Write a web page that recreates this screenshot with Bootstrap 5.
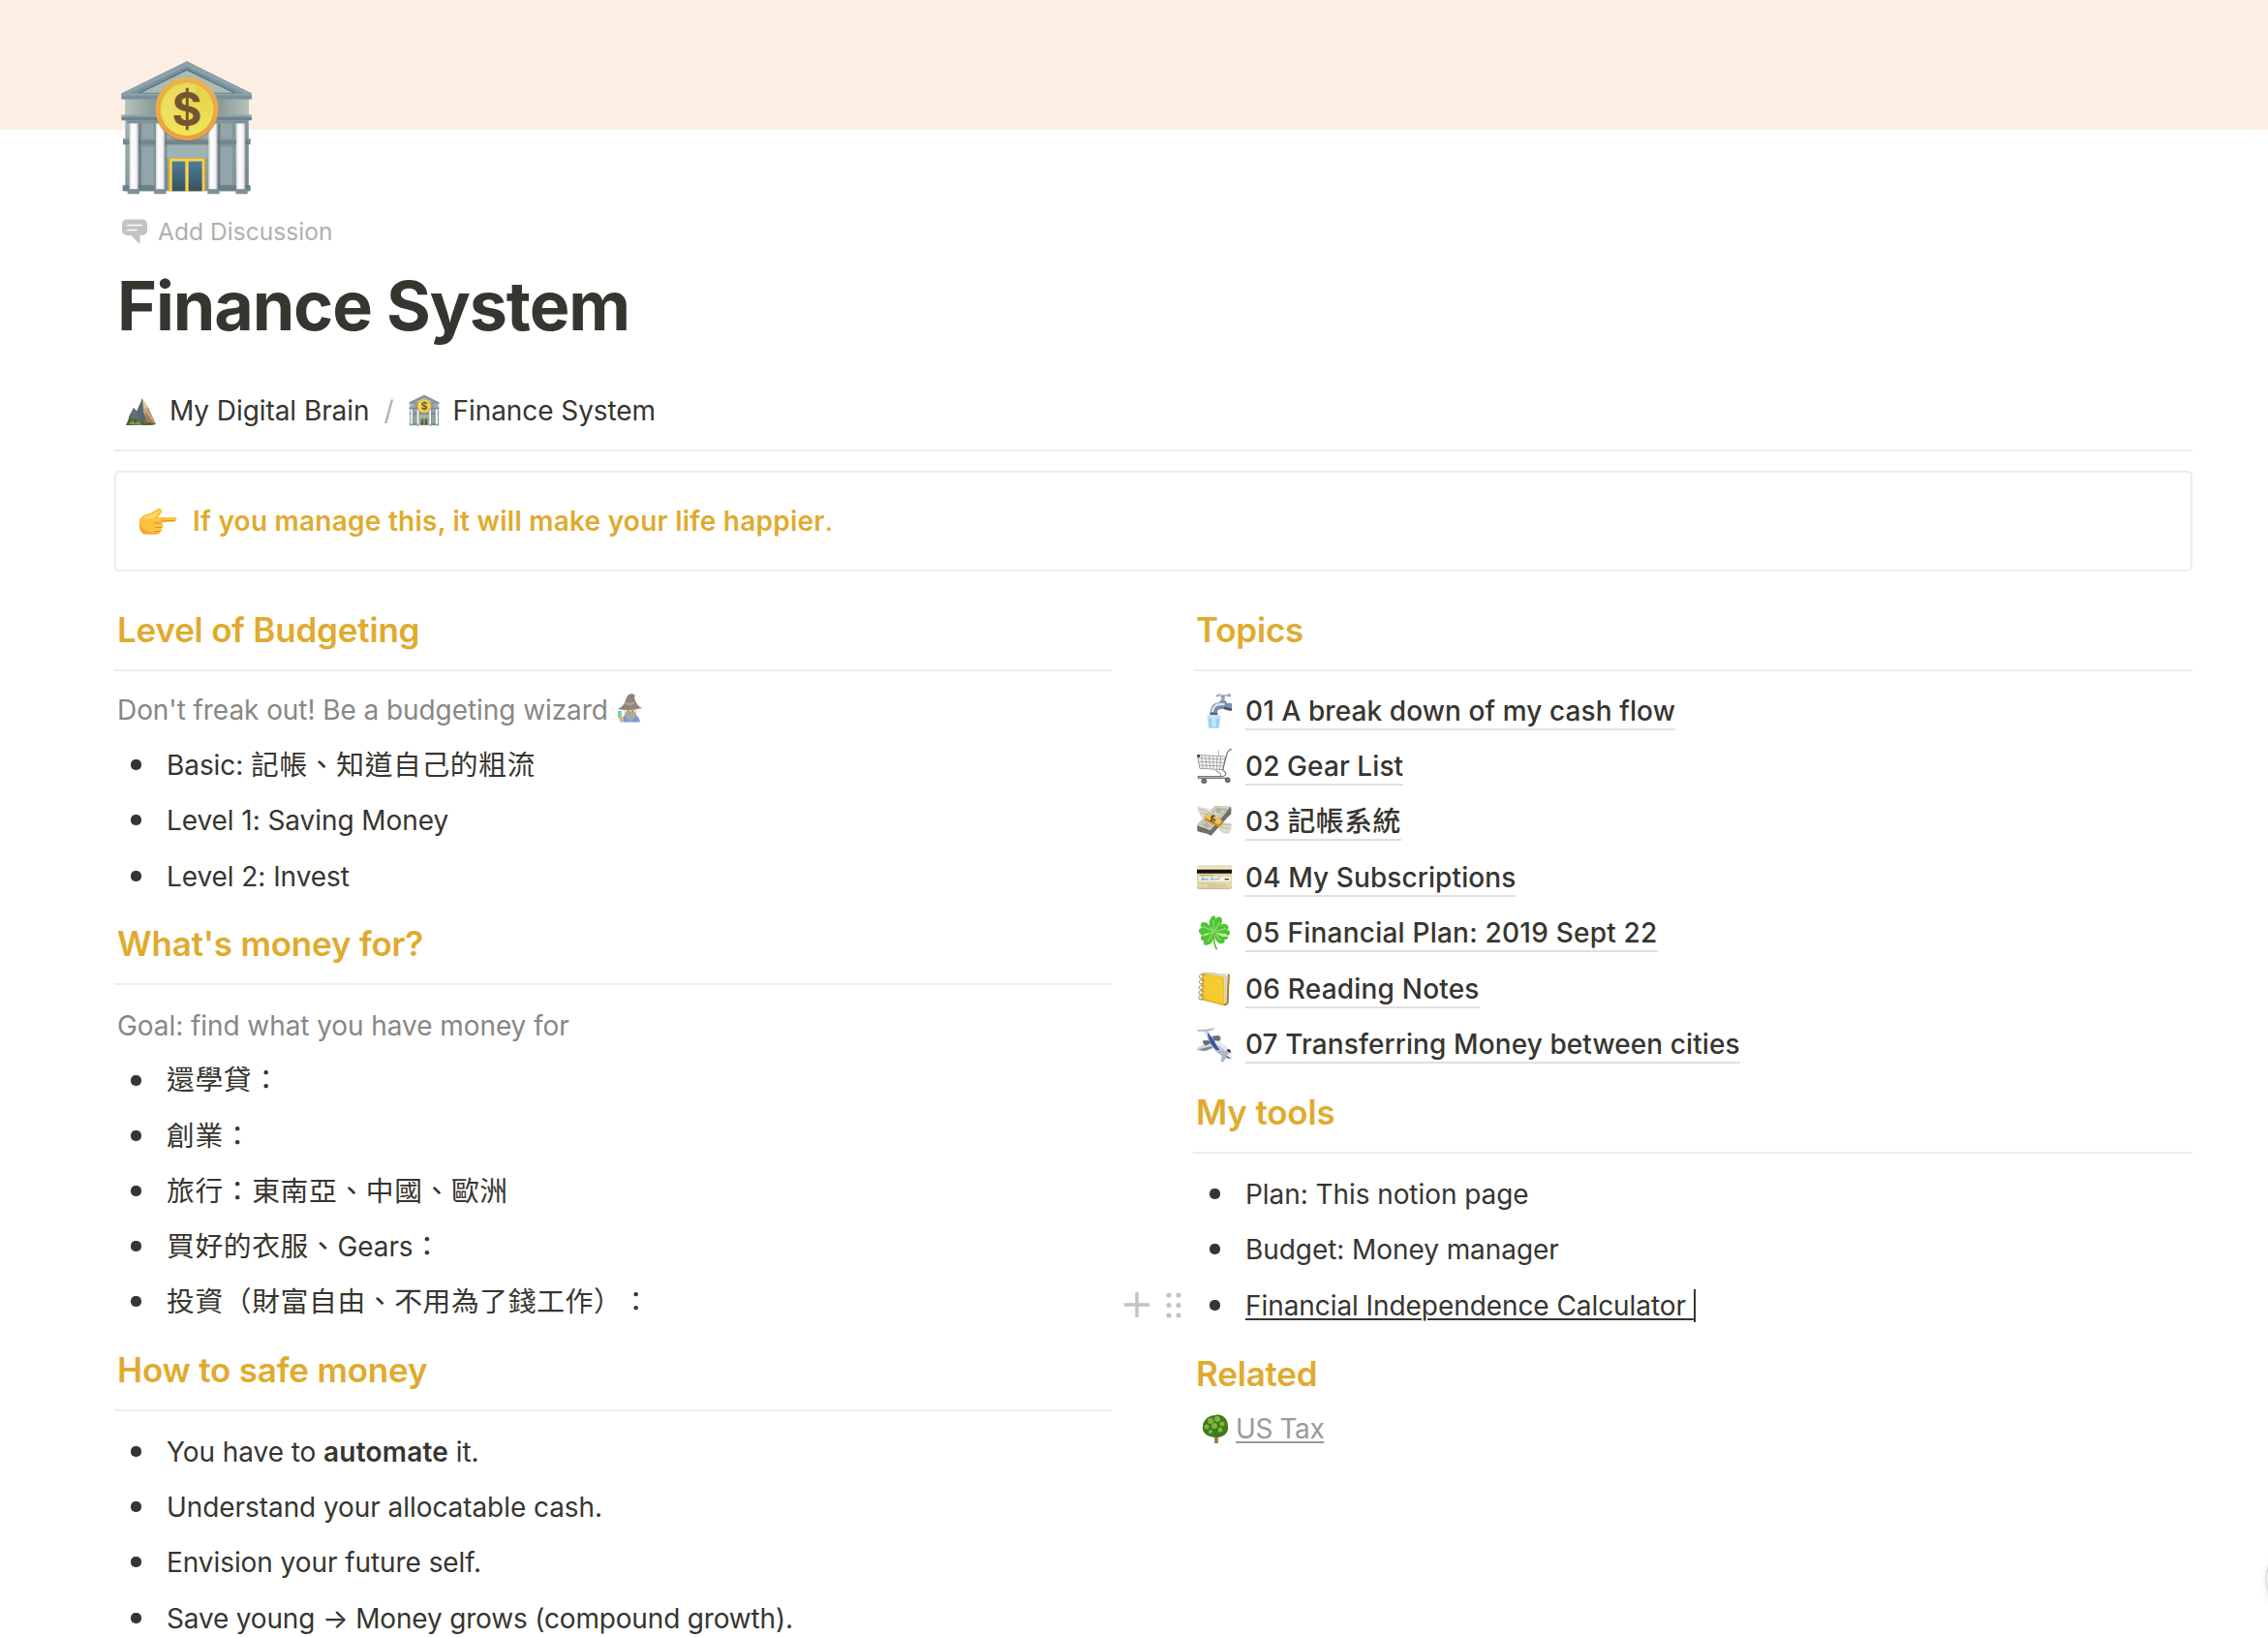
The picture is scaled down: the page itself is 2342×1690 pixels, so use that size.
<!DOCTYPE html>
<html lang="en">
<head>
<meta charset="utf-8">
<meta name="viewport" content="width=device-width, initial-scale=1">
<title>Finance System</title>
<link rel="stylesheet" href="https://cdn.jsdelivr.net/npm/bootstrap@5.3.0/dist/css/bootstrap.min.css">
<style>
body{font-family:Inter,"Noto Sans CJK TC",sans-serif;font-size:28px;line-height:34px;letter-spacing:-.07px;color:#37352f;background:#fff;overflow:hidden;height:1690px}
.cover{height:134px;background:#fdeee3}
.page-body{padding:0 78px 0 118px}
.page-icon{width:138px;height:139px;margin:-72px 0 0 6px}
.discuss{height:38px;margin:19px 0 0 8px;color:#b0afad;font-size:24.5px;gap:11px;letter-spacing:.05px}
.page-title{font-size:70px;line-height:86px;font-weight:700;letter-spacing:-1.15px;margin:15px 0 0 3px}
.crumbs{height:48px;margin:41px 0 16px 12px}
.crumb-sep{color:#b0afad;margin:0 16px 0 15px}
.rule{height:2px;background:#ededec}
.note-box{height:104px;margin-top:20px;border:2px solid #ededec;border-radius:5px;padding-left:23px;color:#dfab2f;font-weight:600;letter-spacing:.24px}
.cols{gap:84px;margin-top:19px}
.col-left{width:1030px}
.sec{height:82px;font-size:35px;line-height:42px;font-weight:600;letter-spacing:-.2px;color:#dfab2f;padding-left:3px;margin:0}
.sec-tools{height:82.500px}
.sec-related{height:70px;padding-top:13px}
.line-list{padding-top:13px}
.budget-list .line{height:57.2px}
.goal-list .line{height:57.1px}
.how-list{padding-top:13px}
.first-list{padding-top:12px}
.budget-list{padding-top:11.500px}
.line{height:57.4px;padding-left:4px;white-space:nowrap}
.bullet::before{content:"";width:11px;height:11px;border-radius:5px;background:#37352f;margin:-1px 26px 0 13px;flex:none}
.soft{color:#888783;padding-left:3px}
.topic{font-weight:500;letter-spacing:.09px;margin-left:14px;height:40px;line-height:40px;border-bottom:2px solid #dfdfde;display:block}
.cj{font-size:28.8px;letter-spacing:.6px;line-height:1;text-spacing-trim:space-all}
.strong-word{letter-spacing:.2px}
.handle{position:absolute;left:-71px;top:13px}
.under{text-decoration:underline;text-decoration-thickness:2px;text-underline-offset:3px;color:inherit}
.tax-link{color:#9b9a97;margin-left:5px}
.caret{width:2px;height:34px;background:#37352f}
.help{position:absolute;right:-71px;top:1594px;width:72px;height:72px;border-radius:50%;background:#fff;box-shadow:0 0 2px 1px #ccc,0 3px 8px #ddd}
</style>
<script src="https://cdn.jsdelivr.net/npm/bootstrap@5.3.0/dist/js/bootstrap.bundle.min.js"></script>
</head>
<body class="position-relative">
<svg width="0" height="0" class="position-absolute">
<defs>
<linearGradient id="wall" x1="0" x2="0" y1="0" y2="1"><stop offset="0" stop-color="#a9b8b6"/><stop offset="1" stop-color="#84979c"/></linearGradient>
<linearGradient id="frieze" x1="0" x2="1"><stop offset="0" stop-color="#b4c2ba"/><stop offset=".3" stop-color="#7f908f"/><stop offset=".7" stop-color="#7f908f"/><stop offset="1" stop-color="#b4c2ba"/></linearGradient>
<linearGradient id="pillar" gradientUnits="userSpaceOnUse" x1="0" x2="28" y1="0" y2="0"><stop offset="0" stop-color="#d9d7da"/><stop offset=".3" stop-color="#fff"/><stop offset=".75" stop-color="#f4f2f5"/><stop offset="1" stop-color="#aeaab0"/></linearGradient>
<linearGradient id="rim" x1="0" x2="0" y1="0" y2="1"><stop offset="0" stop-color="#eab350"/><stop offset="1" stop-color="#e9a045"/></linearGradient>
<linearGradient id="face" x1="0" x2="0" y1="0" y2="1"><stop offset="0" stop-color="#e3cf4c"/><stop offset="1" stop-color="#f3e556"/></linearGradient>
<linearGradient id="glass" x1="0" x2="0" y1="0" y2="1"><stop offset="0" stop-color="#507f99"/><stop offset="1" stop-color="#34505f"/></linearGradient>
<symbol id="bank" viewBox="72 66 414 416">
<path d="M88 185h383v286H88z" fill="url(#wall)"/>
<path d="M132 252h52v216h-52zM376 252h52v216h-52z" fill="#82949a"/><path d="M140 262h36v46h-36zM384 262h36v46h-36zM140 334h36v118h-36zM384 334h36v118h-36z" fill="#92a5a9"/>
<path d="M212 330h132v40H212z" fill="#9fb3b5"/>
<path d="M81 309h395v18H81z" fill="#73868d"/><path d="M81 309h395v4H81z" fill="#8d9fa5"/>
<path d="M88 186h383v50H88z" fill="url(#frieze)"/>
<path d="M279 69 480 169v18H76v-18z" fill="#78909a"/><path d="M279 70 479 169H455L279 85 102 169H77z" fill="#8ca2aa"/>
<path d="M279 93 433 169H126z" fill="#5a6f75"/><path d="M279 98 422 167H138z" fill="#a9bbb9"/>
<path d="M76 169h404v6H76zM76 235h404v6H76z" fill="#8ea3aa"/><path d="M76 241h404v11H76z" fill="#6d838d"/>
<path d="M80 453h52v18H80zM131 453h48v18h-48zM378 453h98v18h-98z" fill="#6b8087"/>
<g fill="#7b929b"><path d="M94 252h42v10H94zM176 252h42v10h-42zM341 252h42v10h-42zM426 252h42v10h-42zM95 465h37v15H95zM177 465h38v15h-38zM343 465h37v15h-37zM430 465h37v15h-37z"/></g>
<g fill="#4f646d" opacity=".45"><path d="M129 262h7v203h-7zM210 262h7v203h-7zM374 262h7v203h-7zM460 262h7v203h-7z"/></g>
<g fill="url(#pillar)"><path transform="translate(101 262)" d="M0 0h28v203H0z"/><path transform="translate(183 262)" d="M0 0h28v203H0z"/><path transform="translate(346 262)" d="M0 0h28v203H0z"/><path transform="translate(432 262)" d="M0 0h28v203H0z"/></g>
<path d="M222 369h114v102H222z" fill="#e5a928"/><path d="M226 371h106v100H226z" fill="#fbd34a"/><path d="M233 379h41v92h-41zM284 379h42v92h-42z" fill="url(#glass)"/>
<circle cx="279" cy="220" r="98" fill="#43545a" opacity=".35"/>
<circle cx="279" cy="217" r="98" fill="url(#rim)"/><circle cx="279" cy="217" r="84" fill="url(#face)" stroke="#d99a3c" stroke-width="2"/>
<path d="M210 180a80 80 0 0 1 104-32l-90 120a80 80 0 0 1-14-88z" fill="#f3e779" opacity=".4"/>
<text x="279" y="270" text-anchor="middle" font-family="Inter,sans-serif" font-weight="700" font-size="142" letter-spacing="0" fill="#74552f">$</text>
</symbol>
</defs>
</svg>

<div class="cover"></div>
<main class="page-body">
<svg class="page-icon d-block"><use href="#bank"/></svg>
<div class="discuss d-flex align-items-center">
<svg width="26" height="26" viewBox="0 0 26 26"><path d="M5 .5h16a5 5 0 0 1 5 5v6.500a5 5 0 0 1-5 5h-2.500v7.500a.9.9 0 0 1-1.500.6L9.500 17H5a5 5 0 0 1-5-5V5.500a5 5 0 0 1 5-5z" fill="#c4c3c1"/><path d="M6 6.500h14M6 11.500h9" stroke="#fff" stroke-width="1.700" stroke-linecap="round"/></svg>
<span>Add Discussion</span></div>
<h1 class="page-title">Finance System</h1>
<nav class="crumbs d-flex align-items-center">
<svg style="margin-top:2px" width="32" height="30" viewBox="0 0 32 30"><path d="M3 20 8 11l4 4 5-13 6 9 8 17-6 1H2z" fill="#6f6a55"/><path d="M17 1 11 15l5 12 4-4-1-9z" fill="#536878"/><path d="M17 1 31 28l-9-3-4-10z" fill="#c7a577"/><path d="m17 1 2 11 4-1z" fill="#e6c693"/><path d="M8 11 3 23l5-3 5 5z" fill="#5b7080"/><path d="m20 15 10 13-9-3z" fill="#a07b50"/><path d="M0 29l4-9 3 4 3-2 3 4 4-1 3 3 4-2 7 2-9 1z" fill="#47652f"/><path d="m3 28 4-4 2 3 4-2 5 4z" fill="#82984c"/></svg>
<span style="margin-left:13px">My Digital Brain</span>
<span class="crumb-sep">/</span>
<svg width="32" height="33" style="margin-top:-2px"><use href="#bank"/></svg>
<span style="margin-left:13px">Finance System</span>
</nav>
<div class="rule"></div>
<div class="note-box d-flex align-items-center">
<svg width="40" height="27" viewBox="0 0 40 27"><path d="M1 12c2-5 6-6 11-7l8-5c3-1 5 2 4 4l-4 5h17c3 0 3.500 4 0 4.500l-13 1c2 3 2 5 0 6 1 3-1 4-2 4-1 2-3 2-5 2H7C1 26 0 17 1 12z" fill="#fbc240"/><path d="M1 16c0 5 2 10 6 10.500h10c2 0 4 0 5-2-7 1-15 1-21-8.500z" fill="#ea9a2e" opacity=".7"/><path d="M16 15h8M17 19.500h7M16 23.500h6M24 13l13-.5" stroke="#dc9028" fill="none"/><path d="M5 10c3-3 8-3 11-5l5-3c1 0 1 1 0 2l-6 7z" fill="#fed766"/></svg>
<span style="margin-left:16px">If you manage this, it will make your life happier<span class="fw-normal">.</span></span>
</div>

<div class="cols d-flex">
<section class="col-left">
<h3 class="sec d-flex align-items-center">Level of Budgeting</h3><div class="rule"></div>
<div class="budget-list">
<div class="line d-flex align-items-center soft"><span>Don't freak out! Be a budgeting wizard</span>
<svg style="margin:-5px 0 0 9px" width="27" height="30" viewBox="0 0 27 30" opacity=".75"><path d="M4 29.500c1-6 5-9 10-9s9 3 10 9z" fill="#5a74c4"/><path d="M8 14h12v6l-6 8-6-8z" fill="#f3c970"/><path d="M8 20c3-2 9-2 12 0l-1 5-5 4-5-4z" fill="#8b8b87"/><path d="M11 18h1.500M15.500 18H17" stroke="#444" stroke-width="1.500"/><path d="M1 16c4-2 7-5 8-9 1-4 3-7 7-7l3 2-1 2c1 4 3 9 8 11-8 2-17 3-25 1z" fill="#6b5c51"/><path d="M9 10c3 1.500 6 1 9-.5" stroke="#9b8874" stroke-width="2" fill="none"/><path d="M1 18h4v7H1z" fill="#40d28c"/><path d="M2 24h5v5H3z" fill="#d99e47"/></svg></div>
<div class="line bullet d-flex align-items-center"><span>Basic: <span class="cj">記帳、知道自己的粗流</span></span></div>
<div class="line bullet d-flex align-items-center">Level 1: Saving Money</div>
<div class="line bullet d-flex align-items-center">Level 2: Invest</div>
</div>
<h3 class="sec d-flex align-items-center">What's money for?</h3><div class="rule"></div>
<div class="line-list goal-list">
<div class="line d-flex align-items-center soft">Goal: find what you have money for</div>
<div class="line bullet d-flex align-items-center"><span class="cj">還學貸：</span></div>
<div class="line bullet d-flex align-items-center"><span class="cj">創業：</span></div>
<div class="line bullet d-flex align-items-center"><span class="cj">旅行：東南亞、中國、歐洲</span></div>
<div class="line bullet d-flex align-items-center"><span><span class="cj">買好的衣服、</span>Gears<span class="cj">：</span></span></div>
<div class="line bullet d-flex align-items-center"><span class="cj">投資（財富自由、不用為了錢工作）：</span></div>
</div>
<h3 class="sec d-flex align-items-center">How to safe money</h3><div class="rule"></div>
<div class="line-list how-list">
<div class="line bullet d-flex align-items-center"><span>You have to <b class="fw-semibold strong-word">automate</b> it.</span></div>
<div class="line bullet d-flex align-items-center">Understand your allocatable cash.</div>
<div class="line bullet d-flex align-items-center">Envision your future self.</div>
<div class="line bullet d-flex align-items-center"><span style="letter-spacing:-.17px">Save young → Money grows (compound growth).</span></div>
</div>
</section>

<section class="flex-grow-1">
<h3 class="sec d-flex align-items-center">Topics</h3><div class="rule"></div>
<div class="first-list">
<div class="line d-flex align-items-center">
<svg width="36" height="36" viewBox="48 45 108 108"><path d="M112 50c0-5 8-6 10-1h18c3-5 12-5 13 1 0 6-9 7-12 2l-7 1v9l-5 4h-4l-3-4v-9l-4-1c-4 5-12 3-11-2z" fill="#8292a8"/><path d="M115 48h34M126 56v9" stroke="#dce5f0" stroke-width="3"/><path d="M120 67c6-4 17-3 19 4l4 5c3-2 6-4 7-1l6 1v20c-9 3-12-5-25-4-16 1-20 3-21 14H90c0-20 8-32 28-34z" fill="#7d8ca4"/><path d="M96 102c2-18 10-24 27-24h11" fill="none" stroke="#dce6f2" stroke-width="7"/><path d="M132 86c8 0 15 7 24 4v8c-10 2-18-4-26-5z" fill="#414e69"/><path d="M88 104h24v8H88z" fill="#596881"/><path d="M79 112h43l-5 41H84z" fill="#c9dfed"/><path d="M84 124h33l-3 26H87z" fill="#8fd2f8"/><path d="M94 112h13v36H94z" fill="#bfe8fc"/></svg>
<a class="topic text-reset text-decoration-none">01 A break down of my cash flow</a></div>
<div class="line d-flex align-items-center">
<svg width="36" height="36" viewBox="48 218 108 108" fill="none" stroke="#777478" stroke-width="2"><path d="M49 237l88 5-9 41-71-4z" fill="#f7f7f7"/><path d="M156 219c-10 2-14 8-16 18l-11 42c-3 11 9 6 8 17-1 6-5 8-14 8H52v5h94" stroke-width="3.500"/><path d="M50 247l85 4M52 258l80 3M54 269l76 3M62 238l5 42M74 239l4 41M86 240l3 41M98 241l1 41M110 241v41M122 242l-3 42M115 222v18" stroke-width="1.700"/><path d="M106 284c5 9 18 5 15 19" stroke-width="3"/><path d="M49 237h8v7h-8z" fill="#17324e" stroke="none"/><circle cx="70" cy="318" r="8" fill="#6a6061"/><circle cx="143" cy="315" r="8" fill="#6a6061"/><circle cx="70" cy="318" r="2" fill="#ddd"/><circle cx="143" cy="315" r="2" fill="#ddd"/></svg>
<a class="topic text-reset text-decoration-none">02 Gear List</a></div>
<div class="line d-flex align-items-center">
<svg width="36" height="36" viewBox="48 394 108 108"><path d="M49 400c10 8 28 3 38 13l-9 26c-12 2-20-5-21-14-5-5-8-15-8-25zM155 453c2 13-1 24-7 31-12 6-22 1-29-8l-12-18 15-13c10 8 22 8 33 8z" fill="#dcd9ce"/><path d="M55 410c10 3 17 2 26 9M60 423c7-2 12 0 18 3M124 454c10 6 18 4 28 5M120 463c10 7 20 5 28 7" stroke="#aca898" stroke-width="2" fill="none"/><path d="M49 459c14-17 34-37 55-59 17 4 37 1 49 3 3 8 0 15 1 22-18 17-36 40-62 67-14-8-30-8-42-13-3-7 0-12-1-20z" fill="#707166"/><path d="M49 459c14-17 34-37 55-59 17 4 37 1 47 3-15 22-39 47-62 73-14-8-29-9-40-17z" fill="#cfd0bd"/><path d="M62 456c15-16 28-28 45-46l34 1-55 55z" fill="none" stroke="#929685" stroke-width="2"/><circle cx="115" cy="414" r="8" fill="#a0b998"/><circle cx="78" cy="459" r="8" fill="#adb49e"/><path d="M81 425l46 21v12l-12 7-42-20v-9z" fill="#ca8b1f"/><path d="M81 425l46 21-12 12-42-22z" fill="#f3c354"/><path d="M104 432c-5-4-14 0-11 6 2 5 13 1 11 7-2 5-11 3-15-1M100 427l-9 21" fill="none" stroke="#55492c" stroke-width="3.500"/></svg>
<a class="topic text-reset text-decoration-none">03 <span class="cj">記帳系統</span></a></div>
<div class="line d-flex align-items-center">
<svg width="36" height="36" viewBox="48 28 108 108"><rect x="48" y="45" width="108" height="72" rx="5" fill="#b8a877"/><rect x="48" y="45" width="108" height="69" rx="5" fill="#e4d8aa"/><path d="M49 48h106v8H49z" fill="#f0e9c5"/><path d="M48 57h108v12H48z" fill="#15130d"/><path d="M55 80h97v14H55z" fill="#f7f5ee"/><path d="M56 75h45" stroke="#968961" stroke-width="2"/><path d="M61 90l6-9-2 10 8-6 2 5 6-6v6M88 90l7-9 0 9 6-5 4 5 5-6 4 5 6-10" fill="none" stroke="#527bb4" stroke-width="2"/><path d="M134 87h13" stroke="#45433b" stroke-width="4"/><path d="M55 100h54M82 105h58M82 110h58" stroke="#c4b88c" stroke-width="2"/></svg>
<a class="topic text-reset text-decoration-none">04 My Subscriptions</a></div>
<div class="line d-flex align-items-center">
<svg width="36" height="36" viewBox="48 200 108 108"><path d="M99 252c-1 25 0 40 8 55l5-2c-8-16-10-30-8-54z" fill="#62bd3f"/><path d="M101 252c-18-19-18-32-8-47 8-8 15-1 12 7 8-12 20-9 21 3 0 12-9 22-25 37zM99 250c-12-25-29-34-37-26-5 7-3 12 4 15-13-1-15 10-9 17 10 10 24 6 42-6zM103 250c16-23 29-29 39-20 6 6 5 12-2 16 12-1 13 11 5 17-12 7-25 1-42-13zM100 253c3 25-9 40-25 39-8-1-9-8-4-13-10 1-15-8-8-16 8-8 24-7 37-10zM102 253c0 22 10 37 24 34 9-1 10-7 6-12 9 2 15-5 11-13-8-8-21-6-41-9z" fill="#4fc234"/><path d="M101 250l-2-35M102 250l17-31M97 249l-31-15M96 253l-29 11M98 256l-17 25M106 250l33-10M108 254l28 10M105 257l15 21" stroke="#8fe36c" stroke-width="5" opacity=".75"/></svg>
<a class="topic text-reset text-decoration-none" style="letter-spacing:.22px">05 Financial Plan: 2019 Sept 22</a></div>
<div class="line d-flex align-items-center">
<svg width="36" height="36" viewBox="48 370 108 108"><path d="M70 372l79 7-4 91-10 6-74-19z" fill="#777469"/><path d="M70 372l74 6-4 90-10 1z" fill="#e8e8e1"/><path d="M76 373l62 12-1 82" stroke="#b1b1a9" stroke-width="2" fill="none"/><path d="M144 377l5 2-4 91-10 6-3-4 10-4z" fill="#b78210"/><path d="M64 374l69 14v88l-72-20z" fill="#efbd1d"/><path d="M68 378l61 12v79l-64-17z" fill="#f5ca32"/><path d="M72 384c-11-11-20-1-16 5 4 4 9 3 13 2M72 401c-11-11-20-1-16 5 4 4 9 3 13 2M71 418c-11-11-20-1-16 5 4 4 9 3 13 2M71 434c-11-11-20-1-16 5 4 4 9 3 13 2M70 449c-11-11-20-1-16 5 4 4 9 3 13 2" fill="none" stroke="#85836d" stroke-width="3"/></svg>
<a class="topic text-reset text-decoration-none" style="letter-spacing:.2px">06 Reading Notes</a></div>
<div class="line d-flex align-items-center">
<svg width="36" height="36" viewBox="48 543 108 108"><path d="M49 552l22-1 31-4-1 5-19 5 7 26-9-2-10-24-19 1z" fill="#b8bec8"/><path d="M48 608l48-23 19 19-42 15-25-4z" fill="#d5d8df"/><path d="M49 614l24 4 36-14-2-5-34 9z" fill="#80889a"/><path d="M80 557c6 14 11 20 19 27 17 3 29 8 42 21 12 12 17 22 14 37-18 0-36-10-51-26-16-17-23-26-32-56z" fill="#e9eaf0"/><path d="M80 559c3 27 12 43 26 55 16 17 33 27 49 28-26-15-46-34-55-59z" fill="#375ba0"/><path d="M66 586l17-1 8 9-13 7c-7 0-12-5-12-15zM95 572l18-2c8 0 11 14 5 17l-16-1z" fill="#686d77"/><path d="M117 571c7 2 7 12 1 15" stroke="#d0d3da" stroke-width="3" fill="none"/><path d="M119 614l30 6-20 34-8 1 4-23-23-16z" fill="#aeb6c4"/><path d="M139 614l11-1 4 10-9-2z" fill="#252c3b"/><path d="M105 597l27 19" stroke="#56607a" stroke-width="3" stroke-dasharray="4 4"/></svg>
<a class="topic text-reset text-decoration-none">07 Transferring Money between cities</a></div>
</div>
<h3 class="sec sec-tools d-flex align-items-center">My tools</h3><div class="rule"></div>
<div class="line-list">
<div class="line bullet d-flex align-items-center">Plan: This notion page</div>
<div class="line bullet d-flex align-items-center">Budget: Money manager</div>
<div class="line bullet d-flex align-items-center position-relative">
<svg class="handle" width="60" height="30" viewBox="0 0 60 30"><path d="M13 2v26M0 15h26" stroke="#c4c3c1" stroke-width="3.500"/><g fill="#c4c3c1"><circle cx="46" cy="5" r="2.600"/><circle cx="56" cy="5" r="2.600"/><circle cx="46" cy="15.500" r="2.600"/><circle cx="56" cy="15.500" r="2.600"/><circle cx="46" cy="26" r="2.600"/><circle cx="56" cy="26" r="2.600"/></g></svg>
<a class="under">Financial Independence Calculator&nbsp;</a><span class="caret"></span></div>
</div>
<h3 class="sec sec-related d-flex align-items-center">Related</h3>
<div class="line d-flex align-items-center">
<svg style="margin-left:5px" width="30" height="30" viewBox="0 0 30 30"><path d="M13 20h4v10h-4z" fill="#b07a42"/><path d="M14 1c7-2 13 4 13 11 1 7-4 12-12 12S0 20 1 13C1 6 7 1 14 1z" fill="#3f7a1d"/><g fill="#7fb73a"><circle cx="9" cy="7" r="3"/><circle cx="16" cy="5" r="3"/><circle cx="21" cy="10" r="2.500"/><circle cx="13" cy="12" r="3"/><circle cx="5" cy="13" r="2.500"/><circle cx="19" cy="16" r="2.500"/><circle cx="9" cy="18" r="2"/></g></svg>
<a class="under tax-link" style="letter-spacing:-.4px">US Tax</a></div>
</section>
</div>
</main>
<div class="help"></div>
</body>
</html>
